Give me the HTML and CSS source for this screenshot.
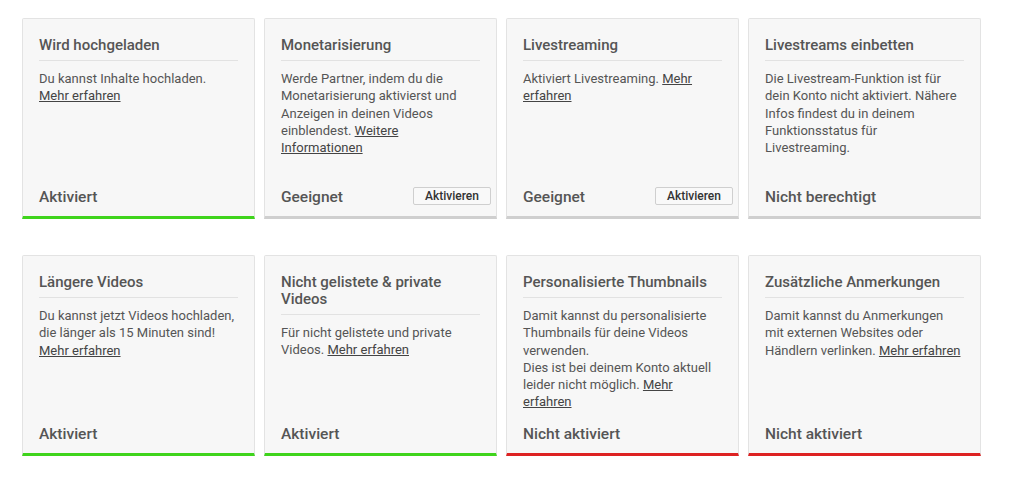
FILE: index.html
```html
<!DOCTYPE html>
<html lang="de">
<head>
  <meta charset="UTF-8" />
  <meta name="viewport" content="width=device-width, initial-scale=1.0"/>
  <title>Funktionsstatus</title>
  <link rel="stylesheet" href="styles.css">
</head>
<body>
  <div class="features">
    <!-- Zeile 1 -->
    <div class="feature on">
      <h3 class="feature-title">Wird hochgeladen</h3>
      <p class="feature-text">Du kannst Inhalte hochladen. <a href="#">Mehr erfahren</a></p>
      <div class="feature-footer">
        <span class="feature-status">Aktiviert</span>
      </div>
    </div>
    <div class="feature">
      <h3 class="feature-title">Monetarisierung</h3>
      <p class="feature-text">Werde Partner, indem du die Monetarisierung aktivierst und Anzeigen in deinen Videos einblendest. <a href="#">Weitere Informationen</a></p>
      <div class="feature-footer">
        <span class="feature-status">Geeignet</span>
        <button class="feature-btn">Aktivieren</button>
      </div>
    </div>
    <div class="feature">
      <h3 class="feature-title">Livestreaming</h3>
      <p class="feature-text">Aktiviert Livestreaming. <a href="#">Mehr erfahren</a></p>
      <div class="feature-footer">
        <span class="feature-status">Geeignet</span>
        <button class="feature-btn">Aktivieren</button>
      </div>
    </div>
    <div class="feature">
      <h3 class="feature-title">Livestreams einbetten</h3>
      <p class="feature-text">Die Livestream-Funktion ist für dein Konto nicht aktiviert. Nähere Infos findest du in deinem Funktionsstatus für Livestreaming.</p>
      <div class="feature-footer">
        <span class="feature-status">Nicht berechtigt</span>
      </div>
    </div>

    <!-- Zeile 2 -->
    <div class="feature on">
      <h3 class="feature-title">Längere Videos</h3>
      <p class="feature-text">Du kannst jetzt Videos hochladen, die länger als 15 Minuten sind! <a href="#">Mehr erfahren</a></p>
      <div class="feature-footer">
        <span class="feature-status">Aktiviert</span>
      </div>
    </div>
    <div class="feature on">
      <h3 class="feature-title">Nicht gelistete &amp; private Videos</h3>
      <p class="feature-text">Für nicht gelistete und private Videos. <a href="#">Mehr erfahren</a></p>
      <div class="feature-footer">
        <span class="feature-status">Aktiviert</span>
      </div>
    </div>
    <div class="feature off">
      <h3 class="feature-title">Personalisierte Thumbnails</h3>
      <p class="feature-text">Damit kannst du personalisierte Thumbnails für deine Videos verwenden.<br>Dies ist bei deinem Konto aktuell leider nicht möglich. <a href="#">Mehr erfahren</a></p>
      <div class="feature-footer">
        <span class="feature-status">Nicht aktiviert</span>
      </div>
    </div>
    <div class="feature off">
      <h3 class="feature-title">Zusätzliche Anmerkungen</h3>
      <p class="feature-text">Damit kannst du Anmerkungen mit externen Websites oder Händlern verlinken. <a href="#">Mehr erfahren</a></p>
      <div class="feature-footer">
        <span class="feature-status">Nicht aktiviert</span>
      </div>
    </div>
  </div>
</body>
</html>
```

FILE: styles.css
```css
/* Allgemein */
* {
  margin: 0;
  padding: 0;
  box-sizing: border-box;
}
body {
  font-family: Roboto, "Liberation Sans", Arial, sans-serif;
  background-color: #fff;
  color: #555;
  padding: 18px 22px;
}

/* Raster der Funktionen */
.features {
  display: grid;
  grid-template-columns: repeat(4, 233px);
  column-gap: 9px;
  row-gap: 36px;
}

.feature {
  display: flex;
  flex-direction: column;
  height: 201px;
  background-color: #f7f7f7;
  border: 1px solid #e3e3e3;
  border-bottom: 3px solid #cfcfcf;
  border-radius: 2px 2px 0 0;
  padding: 16px 16px 0 16px;
}
.feature.on {
  border-bottom-color: #3fd41c;
}
.feature.off {
  border-bottom-color: #dd2222;
}

.feature-title {
  font-size: 15px;
  font-weight: 500;
  line-height: 17px;
  color: #555;
  padding: 2px 0 6px;
  border-bottom: 1px solid #e2e2e2;
}

.feature-text {
  font-size: 13px;
  line-height: 17.3px;
  margin-top: 9px;
  color: #555;
}
.feature-text a {
  color: #444;
  text-decoration: underline;
}

/* Fußzeile mit Status */
.feature-footer {
  margin-top: auto;
  margin-right: -11px;
  height: 28px;
  display: flex;
  align-items: flex-start;
  justify-content: space-between;
}
.feature-status {
  font-size: 15.5px;
  font-weight: 500;
  line-height: 18px;
  color: #555;
}
.feature-btn {
  font-family: inherit;
  font-size: 12px;
  font-weight: 500;
  color: #333;
  background-color: #f9f9f9;
  border: 1px solid #cfcfcf;
  border-radius: 2px;
  width: 78px;
  height: 18px;
  line-height: 15px;
  margin-top: -1px;
  cursor: pointer;
}
```
